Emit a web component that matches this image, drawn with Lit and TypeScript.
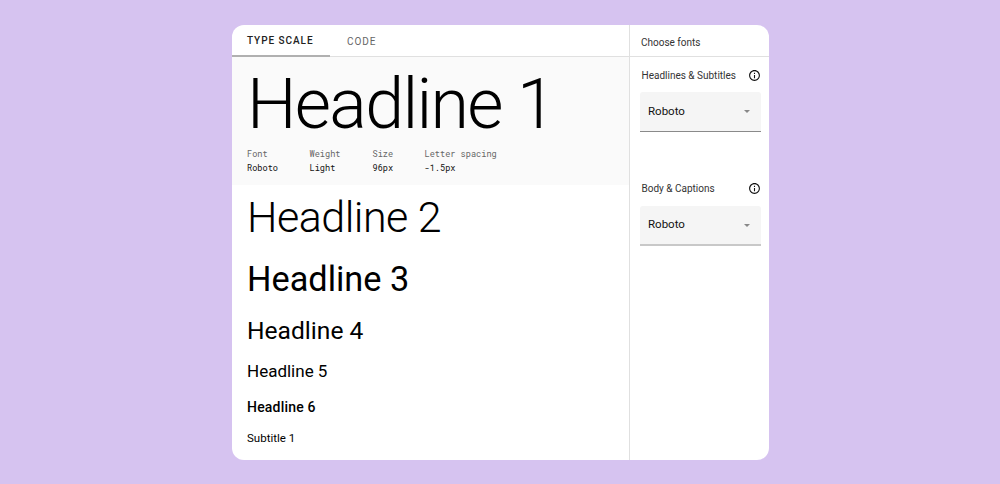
import { LitElement, html, css } from "lit";
import { customElement } from "lit/decorators.js";

const info = html`<svg class="info" viewBox="0 0 24 24" width="13" height="13"><path fill="#111" d="M11 7h2v2h-2zm0 4h2v6h-2zm1-9C6.48 2 2 6.48 2 12s4.48 10 10 10 10-4.48 10-10S17.52 2 12 2zm0 18c-4.41 0-8-3.59-8-8s3.59-8 8-8 8 3.59 8 8-3.59 8-8 8z"/></svg>`;

@customElement("app-root")
export class AppRoot extends LitElement {
  static styles = css`
    :host { display: block; width: 1000px; height: 484px; background: #d6c3f0; font-family: Roboto, sans-serif; color: #000; padding: 25px 231px 24px 232px; box-sizing: border-box; overflow: hidden; }
    .card { display: flex; height: 435px; background: #fff; border-radius: 12px; overflow: hidden; }
    .main { width: 397px; flex: none; display: flex; flex-direction: column; }
    .tabs { display: flex; height: 32px; box-sizing: border-box; border-bottom: 1px solid #e0e0e0; font-size: 10px; font-weight: 500; letter-spacing: 0.95px; }
    .tab { display: flex; align-items: center; height: 32px; box-sizing: border-box; padding-top: 1px; }
    .tab.on { width: 98px; padding-left: 15px; border-bottom: 2px solid #b0b0b0; color: #222; }
    .tab.off { padding-left: 17px; color: #666; font-weight: 400; }
    .hero { background: #fafafa; height: 128px; box-sizing: border-box; padding: 5px 15px 0; }
    .h1 { font-size: 70px; font-weight: 300; letter-spacing: -1.7px; line-height: 85px; }
    .meta { display: flex; margin-top: 0; font-family: "Roboto Mono", "DejaVu Sans Mono", "Liberation Mono", monospace; font-size: 8.6px; line-height: 13.5px; }
    .meta div { display: flex; flex-direction: column; }
    .meta span { color: #666; }
    .meta b { font-weight: 400; color: #111; }
    .m1 { width: 62.5px; } .m2 { width: 63px; } .m3 { width: 52px; }
    .h2 { font-size: 43px; font-weight: 300; line-height: 53px; margin: 6px 15px 0; letter-spacing: -0.5px; }
    .h3 { font-size: 34.3px; font-weight: 400; line-height: 40px; margin: 15px 15px 0; }
    .h4 { font-size: 24.6px; line-height: 28px; margin: 18px 15px 0; }
    .h5 { font-size: 17px; line-height: 22px; margin: 15px 15px 0; }
    .h6 { font-size: 14px; font-weight: 500; line-height: 18px; margin: 16px 15px 0; letter-spacing: .2px; }
    .s1 { font-size: 11.5px; line-height: 16px; margin: 14px 15px 0; }
    .side { flex: 1; border-left: 1px solid #e0e0e0; }
    .head { height: 32px; box-sizing: border-box; border-bottom: 1px solid #e0e0e0; font-size: 10px; display: flex; align-items: center; padding: 3px 0 0 11px; color: #333; }
    .label { display: flex; justify-content: space-between; align-items: center; height: 16px; padding: 0 0 0 11.5px; width: 119.5px; font-size: 10px; color: #333; }
    .l1 { margin-top: 10px; } .l2 { margin-top: 48px; }
    .select { margin: 9px 0 0 10px; width: 120.5px; height: 40px; box-sizing: border-box; background: #f5f5f5; border-bottom: 1px solid #8a8a8a; border-radius: 3px 3px 0 0; display: flex; align-items: center; padding: 0 11px 2px 8px; justify-content: space-between; font-size: 11.5px; color: #111; }
    .select.b2 { border-bottom: 2px solid #c8c8c8; height: 40px; margin-top: 10px; }
    .arrow { width: 0; height: 0; border: 3.5px solid transparent; border-top: 3.5px solid #888; border-bottom: 0; margin-top: 2px; }
  `;
  render() {
    return html`<div class="card">
      <div class="main">
        <div class="tabs"><div class="tab on">TYPE SCALE</div><div class="tab off">CODE</div></div>
        <div class="hero">
          <div class="h1">Headline 1</div>
          <div class="meta">
            <div class="m1"><span>Font</span><b>Roboto</b></div>
            <div class="m2"><span>Weight</span><b>Light</b></div>
            <div class="m3"><span>Size</span><b>96px</b></div>
            <div><span>Letter spacing</span><b>-1.5px</b></div>
          </div>
        </div>
        <div class="h2">Headline 2</div>
        <div class="h3">Headline 3</div>
        <div class="h4">Headline 4</div>
        <div class="h5">Headline 5</div>
        <div class="h6">Headline 6</div>
        <div class="s1">Subtitle 1</div>
      </div>
      <div class="side">
        <div class="head">Choose fonts</div>
        <div class="label l1">Headlines &amp; Subtitles ${info}</div>
        <div class="select">Roboto <i class="arrow"></i></div>
        <div class="label l2">Body &amp; Captions ${info}</div>
        <div class="select b2">Roboto <i class="arrow"></i></div>
      </div>
    </div>`;
  }
}
